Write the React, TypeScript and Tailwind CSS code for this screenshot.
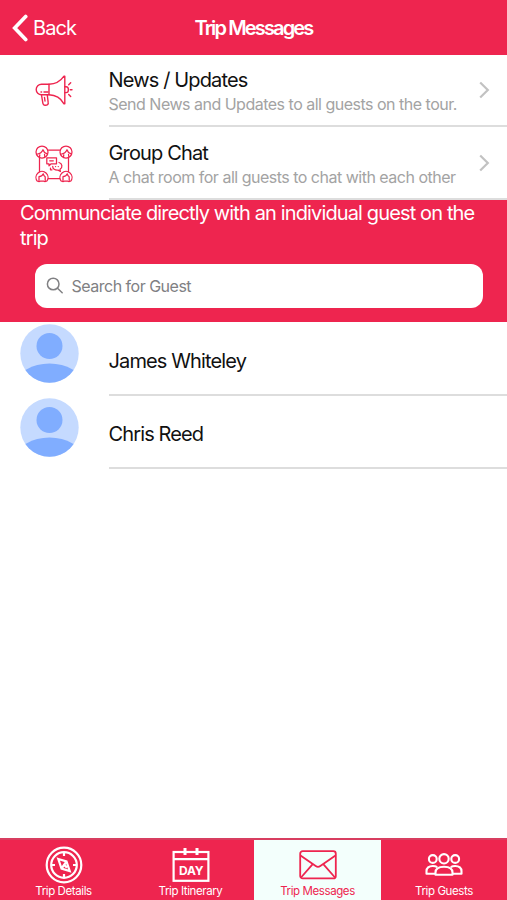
import React from "react";

const RED = "#ee254f";

function Megaphone() {
  return (
    <svg width="38" height="32" viewBox="0 0 38 32" fill="none" stroke={RED} strokeWidth="1.4" strokeLinecap="round" strokeLinejoin="round">
      <path d="M14 9.2H6.5a5.3 5.3 0 0 0 0 10.600H14z" />
      <path d="M14 9.200C20.500 9.200 26 5.500 29 1.200h.8v27.600H29C26 23.500 20.500 20 14 19.800M13 17H9M6 17h.6" />
      <path d="M6.500 20l1.400 8.400c.3 1.600 1.200 2 2.400 1.800l1.500-.2c1.400-.3 1.600-1.100 1.400-2.300L12.300 20M9.500 22.500l.5 3.500" />
      <path d="M29.800 11.800h1.300c1.600 0 2.300 1.300 2.300 2.900s-.7 2.900-2.300 2.900h-1.300M35.300 14.700h1.700M33.700 9.800l2-2M33.700 19.600l2 2" />
    </svg>
  );
}

function TopPerson({ x, y }: { x: number; y: number }) {
  return (
    <g transform={`translate(${x} ${y})`}>
      <circle r="6" fill="#fff" />
      <path d="M-4.600 2c2.900-.4 4.600-2 5.600-4.300.6 2 1.700 3.300 3.700 4M-2.500 4.800l.3-2M2.800 4.800l-.3-2.500" />
    </g>
  );
}

function BottomPerson({ x, y }: { x: number; y: number }) {
  return (
    <g transform={`translate(${x} ${y})`}>
      <path d="M-4.800 5a6 6 0 1 1 9.600 0c-1.200.6-2.200.7-3 .2h-3.600c-.8.500-1.800.4-3-.2z" fill="#fff" />
      <path d="M-3 4.500V.7C-.8.500.7-.6 1.300-2.200 1.600-.8 2.200.2 3.200.7v3.800" />
    </g>
  );
}

function GroupChat() {
  return (
    <svg width="38" height="38" viewBox="0 0 38 38" fill="none" stroke={RED} strokeWidth="1.250" strokeLinecap="round" strokeLinejoin="round">
      <rect x="4.500" y="5" width="29" height="28.500" rx="4" />
      <TopPerson x={7} y={7} />
      <TopPerson x={31} y={7} />
      <BottomPerson x={7} y={31} />
      <BottomPerson x={31} y={31} />
      <path d="M11.800 12.800h9.700v6h-5.300l-2.200 2v-2h-2.200zM14.700 15.800h3.600" />
      <path d="M24 17.500a4.200 3.800 0 0 1 1 6.800l.4 2.200-2.300-1.400c-3.300.3-5.400-1.300-5.400-3.700M20.500 21.500h.1M23.200 21.500h.1M15.500 23v1.800h1.500" />
    </svg>
  );
}

function Avatar() {
  return (
    <svg width="59" height="59" viewBox="0 0 59 59">
      <defs>
        <clipPath id="avatar-disc"><circle cx="29.500" cy="29.500" r="29.200" /></clipPath>
      </defs>
      <circle cx="29.500" cy="29.500" r="29.200" fill="#c5daff" />
      <circle cx="29.500" cy="22" r="13" fill="#80adff" />
      <ellipse cx="29.500" cy="59.500" rx="32" ry="20" fill="#80adff" clipPath="url(#avatar-disc)" />
    </svg>
  );
}

function Chevron() {
  return (
    <svg width="11" height="18" viewBox="0 0 11 18" fill="none" stroke="#c2c2c2" strokeWidth="2.200">
      <path d="M1.200 1.500L8.800 9l-7.600 7.500" />
    </svg>
  );
}

function Compass() {
  return (
    <svg width="38" height="38" viewBox="0 0 38 38" fill="none" stroke="#fff" strokeWidth="2.200">
      <circle cx="19" cy="19" r="17.300" />
      <circle cx="19" cy="19" r="12.800" />
      <path d="M19 6v4M19 28v4M6 19h4M28 19h4M13.300 13l8.200 2.500 3.200 9.500-8.200-2.500zM16.500 22.500l5-7M19.300 18.800l2.600 2.900" />
    </svg>
  );
}

function Calendar() {
  return (
    <svg width="38" height="36" viewBox="0 0 38 36" fill="none" stroke="#fff" strokeWidth="2.200">
      <rect x="1.600" y="5" width="34.800" height="28.800" />
      <path d="M1.600 12.200h34.800" />
      <path d="M13 1v7M25 1v7" strokeWidth="3" />
      <text x="19" y="27.500" textAnchor="middle" fill="#fff" stroke="none" fontFamily="Inter, sans-serif" fontWeight="700" fontSize="12" textLength="24">DAY</text>
    </svg>
  );
}

function Envelope() {
  return (
    <svg width="38" height="30" viewBox="0 0 38 30" fill="none" stroke={RED} strokeWidth="1.800" strokeLinejoin="round">
      <rect x="1.200" y="1.200" width="35.600" height="27.200" rx="2.500" />
      <path d="M1.500 5.500L16.700 16a3.800 3.800 0 0 0 4.600 0L36.500 5.500M2 27.500l11.500-13.200M36 27.500L24.500 14.300" />
    </svg>
  );
}

function People() {
  return (
    <svg width="38" height="24" viewBox="0 0 38 24" fill="none" stroke="#fff" strokeWidth="2.100" strokeLinejoin="round">
      <circle cx="7.800" cy="6" r="3.900" />
      <circle cx="30.200" cy="6" r="3.900" />
      <circle cx="19" cy="5.800" r="4.700" />
      <path d="M10.500 21.800v-2.300c0-3.700 3-5.800 8.500-5.800s8.500 2.100 8.500 5.800v2.300z" />
      <path d="M10 20.800H1.500v-2.500c0-3.500 2.300-5.300 6.300-5.300 1.800 0 3.300.4 4.400 1.100M28 20.800h8.500v-2.500c0-3.500-2.300-5.300-6.300-5.300-1.800 0-3.300.4-4.400 1.100" />
    </svg>
  );
}

type MessageRowProps = { icon: React.ReactNode; title: string; subtitle: string; className: string };

function MessageRow({ icon, title, subtitle, className }: MessageRowProps) {
  return (
    <div className={`flex ${className}`}>
      <div className="flex w-[108.500px] items-center justify-center">{icon}</div>
      <div className="flex flex-1 items-center border-b-2 border-[#dddddd]">
        <div className="flex-1 whitespace-nowrap pt-1">
          <div className="text-[20px] leading-[25px] tracking-[-0.850px] text-[#111]">{title}</div>
          <div className="text-[16px] leading-[23px] tracking-[-0.5px] text-[#a3a3a3]">{subtitle}</div>
        </div>
        <div className="mr-4 w-[12px]"><Chevron /></div>
      </div>
    </div>
  );
}

function GuestRow({ name }: { name: string }) {
  return (
    <div className="flex h-[73.500px]">
      <div className="w-[108.500px] pl-5 pt-[2px]"><Avatar /></div>
      <div className="flex flex-1 items-center border-b-2 border-[#dddddd] pt-[7px] text-[20px] leading-[25px] tracking-[-0.870px] text-[#111]">{name}</div>
    </div>
  );
}

function Tab({ icon, label, active = false }: { icon: React.ReactNode; label: string; active?: boolean }) {
  return (
    <div className={`flex flex-col items-center ${active ? "bg-[#f3fffc] text-[#ee254f]" : "text-white"}`}>
      <div className="flex h-[44px] items-center pt-[7px]">{icon}</div>
      <span>{label}</span>
    </div>
  );
}

export default function App() {
  return (
    <div className="flex h-[900px] w-[507px] flex-col overflow-hidden bg-white font-['Inter',sans-serif]">
      <header className="grid h-[54.500px] grid-cols-[1fr_auto_1fr] items-center bg-[#ee254f] pt-px text-white">
        <div className="flex items-center gap-1 pl-3">
          <svg width="17" height="28" viewBox="0 0 17 28" fill="none" stroke="#fff" strokeWidth="3.700" strokeLinecap="round">
            <path d="M13.700 2.500L2.700 14l11 11.500" />
          </svg>
          <span className="text-[20px] tracking-[-0.9px]">Back</span>
        </div>
        <h1 className="text-[20px] font-semibold tracking-[-1.850px]">Trip Messages</h1>
      </header>
      <MessageRow className="h-[72.500px]" icon={<Megaphone />} title="News / Updates" subtitle="Send News and Updates to all guests on the tour." />
      <MessageRow className="h-[73px]" icon={<GroupChat />} title="Group Chat" subtitle="A chat room for all guests to chat with each other" />
      <section className="h-[122px] bg-[#ee254f] px-5 pt-px">
        <p className="whitespace-nowrap text-[20px] leading-[24.500px] tracking-[-0.870px] text-white">
          Communciate directly with an individual guest on the<br />trip
        </p>
        <div className="ml-[15px] mt-[13.500px] flex h-[44px] w-[448px] items-center rounded-[12px] bg-white pl-[11px]">
          <svg width="18" height="18" viewBox="0 0 18 18" fill="none" stroke="#808083" strokeWidth="1.500" strokeLinecap="round">
            <circle cx="7.200" cy="7" r="5.800" /><path d="M11.500 11.300l4.700 4.500" />
          </svg>
          <span className="ml-[7.500px] text-[16px] tracking-[-0.5px] text-[#808083]">Search for Guest</span>
        </div>
      </section>
      <main className="flex-1">
        <GuestRow name="James Whiteley" />
        <GuestRow name="Chris Reed" />
      </main>
      <nav className="grid h-[62.500px] grid-cols-[127px_127px_127px_126px] border-t-2 border-[#d83d60] bg-[#ee254f] text-[11.500px] leading-[14px] tracking-[-0.4px]">
        <Tab icon={<Compass />} label="Trip Details" />
        <Tab icon={<Calendar />} label="Trip Itinerary" />
        <Tab icon={<Envelope />} label="Trip Messages" active />
        <Tab icon={<People />} label="Trip Guests" />
      </nav>
    </div>
  );
}
